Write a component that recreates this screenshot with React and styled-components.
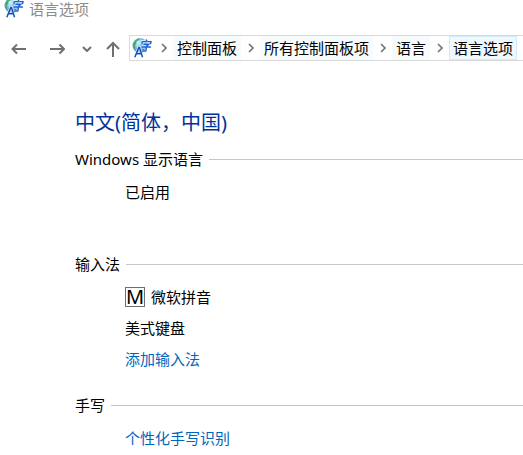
import React from "react";
import styled, { createGlobalStyle } from "styled-components";

const GlobalStyle = createGlobalStyle`
  body {
    margin: 0;
    background: #ffffff;
    color: #000000;
    font-family: "Noto Sans", "Noto Sans CJK SC", sans-serif;
    font-size: 15px;
    line-height: 20px;
  }
`;

const TitleBar = styled.header`
  display: flex;
  align-items: flex-end;
  gap: 5px;
  height: 18px;
  padding-left: 4px;
  color: #8c8c8c;
  line-height: 18px;
`;

const NavBar = styled.nav`
  display: flex;
  align-items: center;
  margin-top: 17px;
  padding-left: 10px;
`;

const NavButton = styled.button`
  display: flex;
  align-items: center;
  justify-content: center;
  width: ${({ $width }) => $width}px;
  height: 24px;
  margin: 0 ${({ $gap }) => $gap}px 0 0;
  padding: 2px 0 0;
  border: none;
  background: transparent;
  color: #707070;
`;

const AddressBar = styled.div`
  display: flex;
  flex: 1;
  align-items: center;
  min-width: 0;
  height: 24px;
  padding-left: 2px;
  border: 1px solid #d9d9d9;
  border-right: none;
`;

const CrumbList = styled.ol`
  display: flex;
  margin: 0;
  padding: 0 0 0 2px;
  list-style: none;
`;

const CrumbItem = styled.li`
  display: flex;
  align-items: center;
  flex-shrink: 0;
`;

const Separator = styled.span`
  display: flex;
  justify-content: center;
  width: 19px;
  color: #777777;
`;

const Crumb = styled.a`
  padding: 0 3px;
  border: 1px solid ${({ $active }) => ($active ? "#d3e9f5" : "#f6fbfe")};
  background: ${({ $active }) => ($active ? "#eef8fd" : "#f6fbfe")};
  color: #000000;
  line-height: 22px;
  text-decoration: none;
  white-space: nowrap;
`;

const Content = styled.main`
  padding: 48px 0 0 75px;
`;

const Heading = styled.h1`
  margin: 0 0 12px;
  color: #003399;
  font-size: 20px;
  font-weight: 400;
  line-height: 28px;
`;

const Section = styled.section`
  margin-bottom: ${({ $space }) => $space}px;
`;

const SectionTitle = styled.h2`
  display: flex;
  align-items: center;
  gap: 6px;
  margin: 0 0 13px;
  font-size: 15px;
  font-weight: 400;

  &::after {
    content: "";
    flex: 1;
    height: 1px;
    background: #c6c6c6;
  }
`;

const Items = styled.div`
  display: flex;
  flex-direction: column;
  align-items: flex-start;
  gap: 11px;
  padding-left: 50px;
`;

const Item = styled.div`
  display: flex;
  align-items: center;
  gap: 6px;
`;

const ItemLink = styled.a`
  color: #0066bb;
  text-decoration: none;
`;

const ImeBadge = styled.span`
  box-sizing: border-box;
  width: 20px;
  height: 20px;
  border: 1px solid #6e6e6e;
  font-size: 20px;
  line-height: 18px;
  display: flex;
  justify-content: center;
`;

const Icon = styled.svg`
  display: block;
  flex-shrink: 0;
  fill: none;
  stroke: currentColor;
  stroke-width: 2;
`;

const LanguageIcon = ({ id }) => (
  <Icon width="20" height="20" viewBox="0 0 20 20" aria-hidden="true">
    <defs>
      <radialGradient id={id} cx="0.35" cy="0.3" r="0.75">
        <stop offset="0" stopColor="#d6f8f5" />
        <stop offset="0.5" stopColor="#79bce8" />
        <stop offset="1" stopColor="#2a6fc6" />
      </radialGradient>
    </defs>
    <circle cx="8" cy="7.5" r="7.5" fill={`url(#${id})`} stroke="none" />
    <path
      d="M1 6C2 2 5 .2 8 .4L7 2 4.5 3.5 4.5 5.5 3 7.5 3.5 10 2 11C.8 10 .5 8 1 6Z"
      fill="#45ab78"
      stroke="none"
    />
    <path d="M9 1L12 1.5 14 3 11 4Z" fill="#79cf8d" stroke="none" />
    <path
      d="M14.2 1.5L14.7 3M9.8 6.2L10.3 3.6H19L18.5 6M11.5 6.2H17L14.3 8.2M9.5 9H19M14.4 8.2L14 12.5Q13.8 13.5 12 13"
      stroke="#ffffff"
      strokeWidth="3"
      opacity="0.7"
    />
    <path
      d="M14.2 1.5L14.7 3M9.8 6.2L10.3 3.6H19L18.5 6M11.5 6.2H17L14.3 8.2M9.5 9H19M14.4 8.2L14 12.5Q13.8 13.5 12 13"
      stroke="#1e63d2"
      strokeWidth="1.4"
    />
    <path
      d="M3 19L6.8 9.5H7.5L10.5 19M4.5 15.7H9.5"
      stroke="#ffffff"
      strokeWidth="3"
      opacity="0.7"
    />
    <path d="M2.8 19.2L6.8 9.6H7.5L10.5 19.2M4.5 15.7H9.5" stroke="#1a50b8" strokeWidth="1.5" />
  </Icon>
);

const ChevronRight = () => (
  <Icon width="6" height="10" viewBox="0 0 6 10" aria-hidden="true">
    <path d="M1 1L5 5L1 9" strokeWidth="1.7" />
  </Icon>
);

const crumbs = ["控制面板", "所有控制面板项", "语言", "语言选项"];

const App = () => (
  <>
    <GlobalStyle />
    <TitleBar>
      <LanguageIcon id="title-globe" />
      <span>语言选项</span>
    </TitleBar>
    <NavBar>
      <NavButton $width={17} $gap={21} aria-label="后退">
        <Icon width="16" height="12" viewBox="0 0 16 12">
          <path d="M15 6H1.5M6 1.5L1.5 6L6 10.5" />
        </Icon>
      </NavButton>
      <NavButton $width={17} $gap={17} aria-label="前进">
        <Icon width="16" height="12" viewBox="0 0 16 12">
          <path d="M1 6H15M10.5 1.5L15 6L10.5 10.5" />
        </Icon>
      </NavButton>
      <NavButton $width={10} $gap={13} aria-label="最近浏览的位置">
        <Icon width="10" height="6" viewBox="0 0 10 6">
          <path d="M1 1L5 5L9 1" />
        </Icon>
      </NavButton>
      <NavButton $width={16} $gap={8} aria-label="上移">
        <Icon width="16" height="16" viewBox="0 0 16 16">
          <path d="M8 16V2M2 8L8 2L14 8" />
        </Icon>
      </NavButton>
      <AddressBar>
        <LanguageIcon id="address-globe" />
        <CrumbList>
          {crumbs.map((name, index) => (
            <CrumbItem key={name}>
              <Separator>
                <ChevronRight />
              </Separator>
              <Crumb href="#" $active={index === crumbs.length - 1}>
                {name}
              </Crumb>
            </CrumbItem>
          ))}
        </CrumbList>
      </AddressBar>
    </NavBar>
    <Content>
      <Heading>中文(简体，中国)</Heading>
      <Section $space={52}>
        <SectionTitle>Windows 显示语言</SectionTitle>
        <Items>
          <Item>已启用</Item>
        </Items>
      </Section>
      <Section $space={26}>
        <SectionTitle>输入法</SectionTitle>
        <Items>
          <Item>
            <ImeBadge>M</ImeBadge>
            微软拼音
          </Item>
          <Item>美式键盘</Item>
          <ItemLink href="#">添加输入法</ItemLink>
        </Items>
      </Section>
      <Section $space={0}>
        <SectionTitle>手写</SectionTitle>
        <Items>
          <ItemLink href="#">个性化手写识别</ItemLink>
        </Items>
      </Section>
    </Content>
  </>
);

export default App;
